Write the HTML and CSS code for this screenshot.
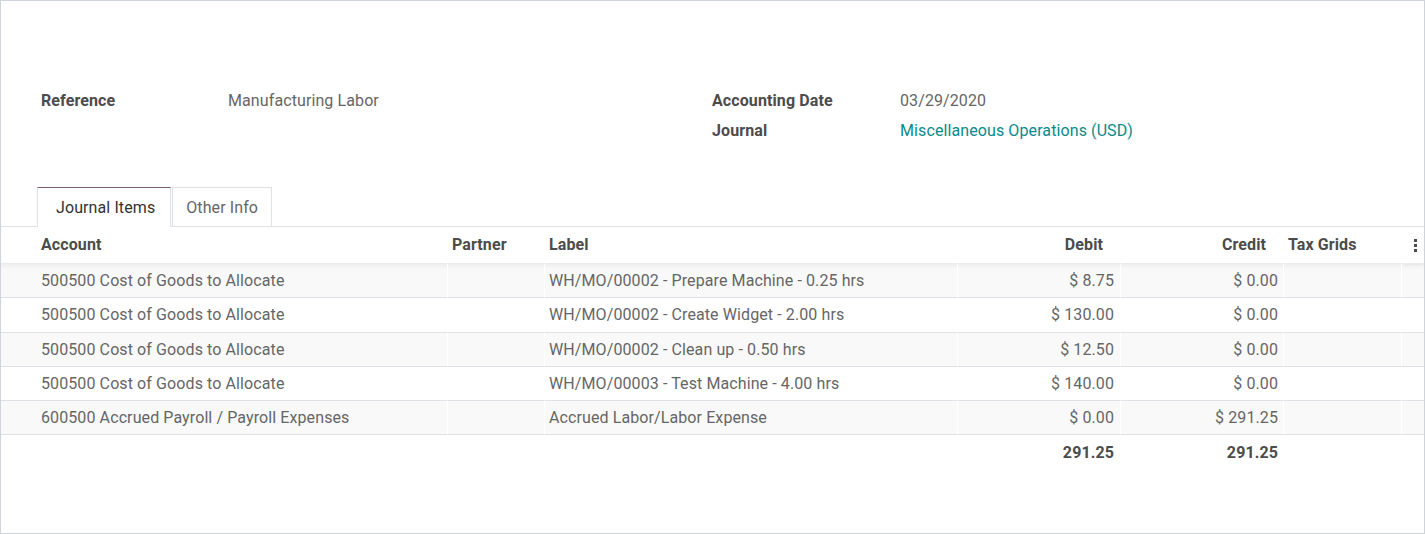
FILE: index.html
```html
<!DOCTYPE html>
<html>
<head>
<meta charset="utf-8">
<link rel="stylesheet" href="styles.css">
</head>
<body>
<div class="sheet">
  <div class="groups">
    <div class="group">
      <div class="field"><span class="label">Reference</span><span class="value">Manufacturing Labor</span></div>
    </div>
    <div class="group">
      <div class="field"><span class="label">Accounting Date</span><span class="value">03/29/2020</span></div>
      <div class="field"><span class="label">Journal</span><a class="value link">Miscellaneous Operations (USD)</a></div>
    </div>
  </div>
  <div class="tabs">
    <div class="tab active">Journal Items</div>
    <div class="tab">Other Info</div>
  </div>
  <table class="lines">
    <colgroup>
      <col class="c-account"><col class="c-partner"><col class="c-label"><col class="c-debit"><col class="c-credit"><col class="c-tax"><col class="c-opt">
    </colgroup>
    <thead>
      <tr>
        <th class="first">Account</th>
        <th>Partner</th>
        <th>Label</th>
        <th class="num">Debit</th>
        <th class="num">Credit</th>
        <th>Tax Grids</th>
        <th class="opt"><span class="dots"><i></i><i></i><i></i></span></th>
      </tr>
    </thead>
    <tbody>
      <tr>
        <td class="first">500500 Cost of Goods to Allocate</td><td></td><td>WH/MO/00002 - Prepare Machine - 0.25 hrs</td><td class="num">$ 8.75</td><td class="num">$ 0.00</td><td></td><td></td>
      </tr>
      <tr>
        <td class="first">500500 Cost of Goods to Allocate</td><td></td><td>WH/MO/00002 - Create Widget - 2.00 hrs</td><td class="num">$ 130.00</td><td class="num">$ 0.00</td><td></td><td></td>
      </tr>
      <tr>
        <td class="first">500500 Cost of Goods to Allocate</td><td></td><td>WH/MO/00002 - Clean up - 0.50 hrs</td><td class="num">$ 12.50</td><td class="num">$ 0.00</td><td></td><td></td>
      </tr>
      <tr>
        <td class="first">500500 Cost of Goods to Allocate</td><td></td><td>WH/MO/00003 - Test Machine - 4.00 hrs</td><td class="num">$ 140.00</td><td class="num">$ 0.00</td><td></td><td></td>
      </tr>
      <tr>
        <td class="first">600500 Accrued Payroll / Payroll Expenses</td><td></td><td>Accrued Labor/Labor Expense</td><td class="num">$ 0.00</td><td class="num">$ 291.25</td><td></td><td></td>
      </tr>
    </tbody>
    <tfoot>
      <tr>
        <td class="first"></td><td></td><td></td><td class="num">291.25</td><td class="num">291.25</td><td></td><td></td>
      </tr>
    </tfoot>
  </table>
</div>
</body>
</html>
```
FILE: styles.css
```css
html, body {
  margin: 0;
  padding: 0;
  background: #fff;
}
body {
  font-family: Roboto, "Liberation Sans", sans-serif;
  font-size: 16px;
  letter-spacing: 0.1px;
  color: #666666;
}
.sheet {
  box-sizing: border-box;
  width: 1425px;
  height: 534px;
  border: 1px solid #ced4da;
  overflow: hidden;
}
.groups {
  display: flex;
  padding: 85px 0 0 40px;
  height: 101px;
}
.group {
  width: 672px;
}
.group + .group {
  margin-left: -1px;
}
.field {
  display: flex;
  height: 30px;
  line-height: 30px;
}
.label {
  width: 187px;
  font-weight: bold;
  color: #4c4c4c;
}
.group + .group .label {
  width: 188px;
}
.link {
  color: #0a8a8a;
  text-decoration: none;
}
.tabs {
  display: flex;
  padding-left: 36px;
  border-bottom: 1px solid #dee2e6;
  height: 39px;
}
.tab {
  box-sizing: border-box;
  height: 40px;
  line-height: 39px;
  padding: 0 13px 0 13px;
  border: 1px solid #dee2e6;
  border-bottom: none;
  margin-right: 1px;
  color: #666666;
}
.tab.active {
  border-top-color: #7c5b73;
  color: #333333;
  background: #fff;
  padding: 0 15px 0 18px;
  height: 40px;
}
.lines {
  width: 1423px;
  table-layout: fixed;
  border-collapse: separate;
  border-spacing: 0;
}
.c-account { width: 446px; }
.c-partner { width: 97px; }
.c-label { width: 413px; }
.c-debit { width: 163px; }
.c-credit { width: 163px; }
.c-tax { width: 118px; }
.c-opt { width: 23px; }
th, td {
  padding: 0 5px 0 4px;
  text-align: left;
  white-space: nowrap;
  overflow: hidden;
  border-left: 1px solid #fff;
}
th:first-child, td:first-child { border-left: none; }
th {
  height: 34px;
  padding-bottom: 2px;
  font-weight: bold;
  color: #4c4c4c;
  border-bottom: 1px solid #e9ecef;
  box-shadow: 0 2px 3px -2px rgba(0,0,0,0.06);
}
th.num { text-align: right; padding-right: 17px; }
td.num { text-align: right; padding-right: 6px; }
td.num + td.num { padding-right: 5px; }
.first { padding-left: 40px; }
tbody td {
  height: 33.25px;
  border-bottom: 1px solid #dee2e6;
}
tbody tr:nth-child(odd) td { background: #f9f9f9; }
tbody tr:first-child td {
  background: linear-gradient(#efefef, #f9f9f9 6px);
}
tfoot td {
  height: 34px;
  font-weight: bold;
  color: #4c4c4c;
}
th.opt { padding: 0; position: relative; }
.dots {
  position: absolute;
  right: 7px;
  top: 12px;
  display: flex;
  flex-direction: column;
  gap: 2px;
}
.dots i {
  display: block;
  width: 3px;
  height: 3px;
  background: #4c4c4c;
}
```
